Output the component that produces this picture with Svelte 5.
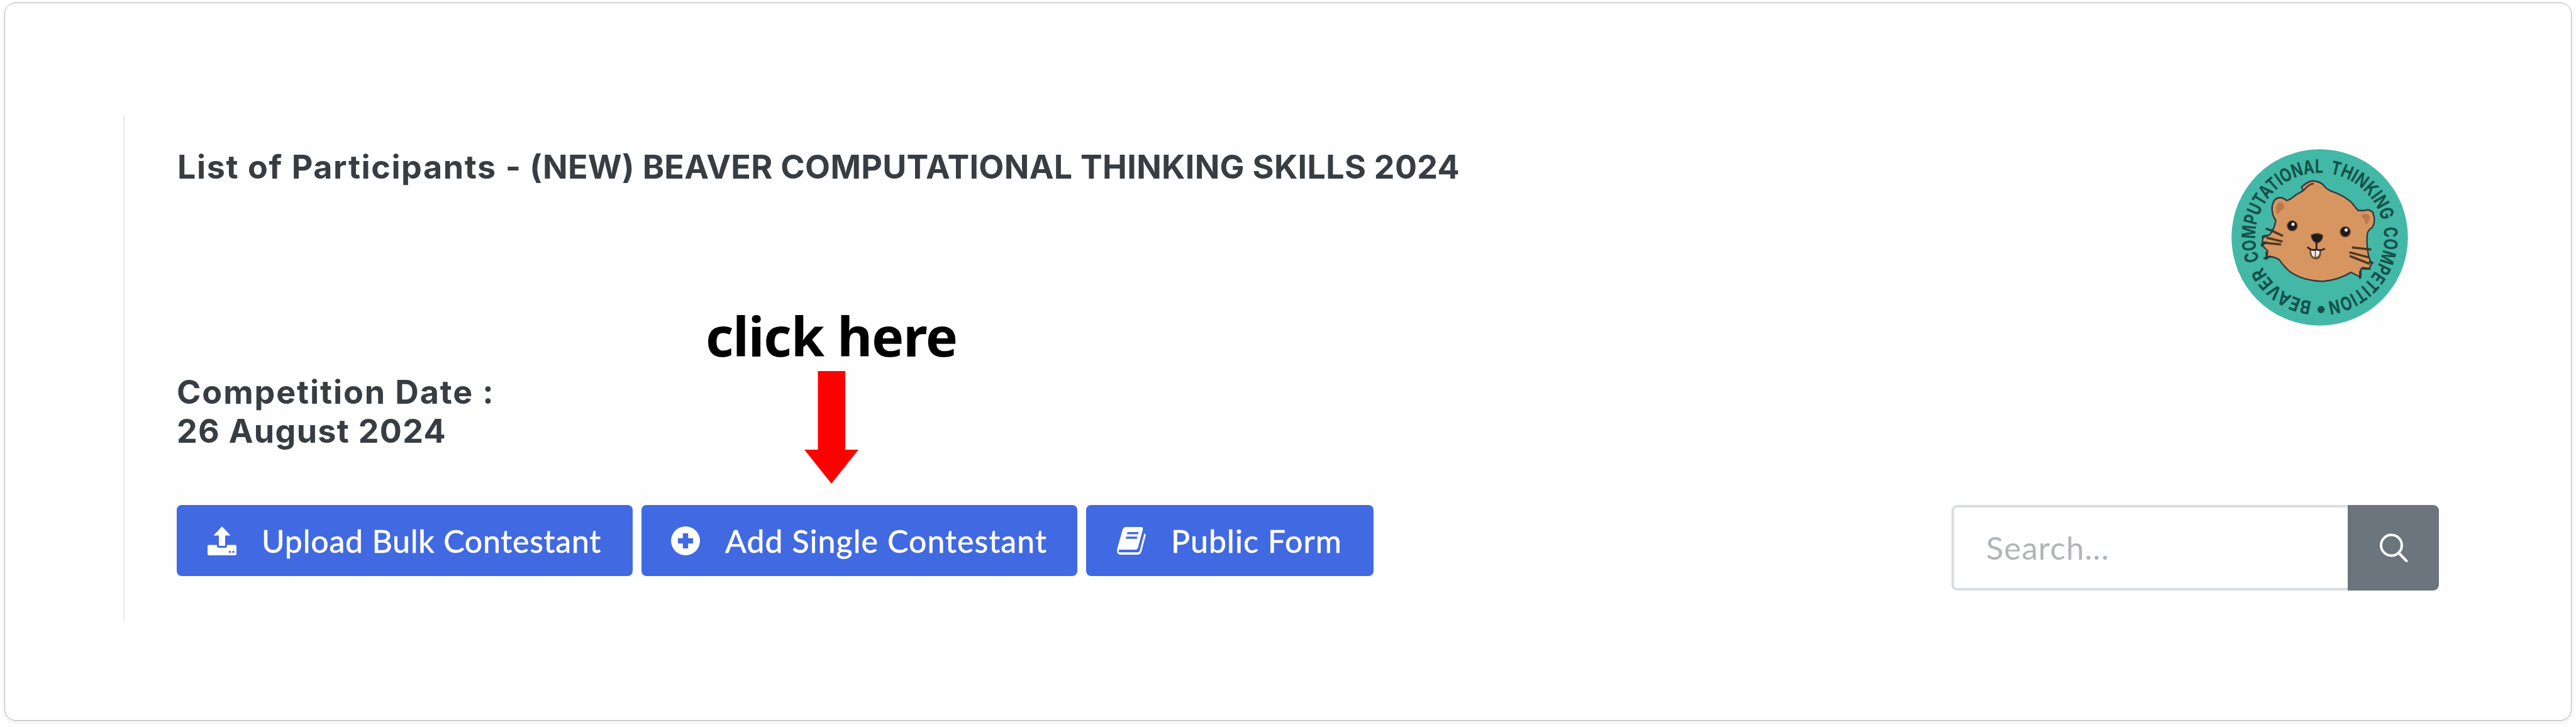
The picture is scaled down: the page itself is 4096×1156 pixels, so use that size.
<script lang="ts">
  interface ArcWord {
    text: string;
    from: number; // degrees clockwise from the top
    to: number;
  }

  const badgeWords: ArcWord[] = [
    { text: 'COMPUTATIONAL', from: 249, to: 363 },
    { text: 'THINKING', from: 9, to: 75 },
    { text: 'COMPETITION', from: 81, to: 173 },
    { text: 'BEAVER', from: 187, to: 243 }
  ];

  const badgeCenter = { x: 708, y: 700 };
  const badgeTextRadius = 434;

  let search = $state('');

  function pointAt(deg: number) {
    const rad = (deg * Math.PI) / 180;
    const x = badgeCenter.x + badgeTextRadius * Math.sin(rad);
    const y = badgeCenter.y - badgeTextRadius * Math.cos(rad);
    return `${x.toFixed(1)} ${y.toFixed(1)}`;
  }

  function arcPath(word: ArcWord) {
    // a little slack at the end so the last glyph is not dropped
    return `M${pointAt(word.from)} A${badgeTextRadius} ${badgeTextRadius} 0 0 1 ${pointAt(word.to + 4)}`;
  }

  function arcLength(word: ArcWord) {
    return ((word.to - word.from) * Math.PI * badgeTextRadius) / 180;
  }
</script>

<div class="card">
  <main class="panel">
    <header class="header">
      <h1 class="title">
        <span class="title__lead">List of Participants -</span> (NEW) BEAVER COMPUTATIONAL THINKING SKILLS 2024
      </h1>
      <svg class="badge" viewBox="113 105 1190 1190" role="img" aria-label="Beaver">
        <circle cx="708" cy="700" r="594" fill="#43b8a6" />
        {#each badgeWords as word, i}
          <path id="arc-{i}" d={arcPath(word)} fill="none" />
          <text class="badge__text">
            <textPath href="#arc-{i}" textLength={arcLength(word)} lengthAdjust="spacingAndGlyphs">{word.text}</textPath>
          </text>
        {/each}
        <circle cx="717" cy="1186" r="24" fill="#14514a" />
        <path
          d="M655 320 Q705 318 735 350 Q755 378 790 390 Q870 418 920 462 L965 518 L1003 520 Q1045 505 1066 533 Q1088 590 1062 632 Q1030 652 1028 680 Q1022 745 1036 820 L1056 880 L1040 912 L985 912 L984 968 L918 935 Q840 985 730 996 Q620 996 530 946 Q485 920 435 850 Q400 828 352 828 L358 790 L318 752 L328 690 L370 684 Q405 640 412 585 Q385 550 387 498 Q395 430 445 432 Q470 436 485 452 Q515 445 545 415 L597 385 L585 362 Q620 328 655 320 Z"
          fill="#d79660"
          stroke="#33373e"
          stroke-width="10"
          stroke-linejoin="round"
        />
        <path d="M597 385 Q640 335 668 338" fill="none" stroke="#5b4030" stroke-width="12" />
        <path d="M414 525 Q410 470 440 462 Q475 462 468 505 Q440 520 426 545 Z" fill="#b97b49" />
        <path d="M990 545 Q1035 535 1046 560 Q1045 600 1018 612 Q1010 570 990 562 Z" fill="#b97b49" />
        <g fill="#1d1c1d" stroke="#6b4a2e" stroke-width="6">
          <circle cx="523" cy="622" r="34" />
          <circle cx="880" cy="662" r="34" />
          <path d="M650 685 Q690 662 728 685 Q732 722 690 740 Q652 725 650 685 Z" />
        </g>
        <circle cx="528" cy="612" r="11" fill="#e8e8ea" />
        <circle cx="886" cy="650" r="11" fill="#e8e8ea" />
        <path d="M640 780 Q635 845 685 848 Q722 845 718 780 Z" fill="#70502f" />
        <path d="M650 785 H675 V832 Q650 830 650 785 Z M682 785 H708 Q708 830 682 832 Z" fill="#f0eef0" />
        <path d="M686 735 V785 M625 765 Q655 795 686 780 Q715 795 743 775" fill="none" stroke="#2b2421" stroke-width="12" />
        <g fill="none" stroke="#4f371f" stroke-width="15">
          <path d="M375 650 L460 690" />
          <path d="M350 702 L458 728" />
          <path d="M325 735 L448 748" />
          <path d="M925 768 L1055 782" />
          <path d="M908 800 L1040 835" />
          <path d="M910 825 L1045 878" />
        </g>
        <path d="M345 640 L395 660 M318 700 L355 690 M312 758 L350 730 M330 842 L380 828 M350 795 L350 850 M1040 860 L1068 875 M990 905 L1050 912 M980 925 V978" fill="none" stroke="#243b3c" stroke-width="14" />
      </svg>
    </header>

    <section class="date">
      <p class="date__line date__line--label">Competition Date :</p>
      <p class="date__line">26 August 2024</p>
    </section>

    <div class="toolbar">
      <div class="actions">
        <button class="btn btn--upload" type="button">
          <svg class="btn__icon" viewBox="0 0 46 46">
            <path d="M23 0 L36.500 14.500 H28 V31 H18 V14.500 H9.500 Z" />
            <path d="M2 29.500 H15 V31 Q15 34 18 34 H28 Q31 34 31 31 V29.500 H44 Q46 29.500 46 31.500 V43.500 Q46 46 43.500 46 H2.500 Q0 46 0 43.500 V31.500 Q0 29.500 2 29.500 Z M34 39 V42 H37 V39 Z M39.500 39 V42 H42.500 V39 Z" fill-rule="evenodd" />
          </svg>
          <span class="btn__label">Upload Bulk Contestant</span>
        </button>
        <button class="btn btn--add" type="button">
          <svg class="btn__icon" viewBox="0 0 46 46">
            <path d="M23 0 A23 23 0 1 0 23 46 A23 23 0 1 0 23 0 Z M18.800 11 H27.200 V18.800 H35 V27.200 H27.200 V35 H18.800 V27.200 H11 V18.800 H18.800 Z" fill-rule="evenodd" />
          </svg>
          <span class="btn__label">Add Single Contestant</span>
        </button>
        <button class="btn btn--form" type="button">
          <svg class="btn__icon" viewBox="0 0 48 46">
            <path d="M15 0 H40 Q44 0 43 4 L35 34 Q34 37.500 31 37.500 H5 Q2 37.500 3 41 Q3.500 42 5 42 H34 Q37 42 38 39 L45.500 10.500 Q48.500 12 47.500 15 L40.500 41 Q39 46 34.500 46 H5 Q-1 45 0.500 36 L9.500 4 Q11 0 15 0 Z M17.500 8.500 L16.500 12 H35 L36 8.500 Z M15.500 16 L14.500 19.500 H33 L34 16 Z" fill-rule="evenodd" />
          </svg>
          <span class="btn__label">Public Form</span>
        </button>
      </div>

      <form class="search">
        <input class="search__input" type="text" placeholder="Search..." bind:value={search} />
        <button class="search__button" type="button" aria-label="Search">
          <svg class="search__icon" viewBox="0 0 46 46">
            <circle cx="19.500" cy="19" r="16.500" />
            <path d="M31 31 L43.500 44" />
          </svg>
        </button>
      </form>
    </div>
  </main>

  <div class="hint">
    <span class="hint__text">click here</span>
    <svg class="hint__arrow" viewBox="0 0 86 179">
      <path d="M21.500 0 H65 V125 H86 L43 179 L0 125 H21.500 Z" fill="#ff0000" />
    </svg>
  </div>
</div>

<style>
  :global(body) {
    background: #ffffff;
    overflow: hidden;
  }

  .card {
    position: relative;
    box-sizing: border-box;
    width: 4082px;
    height: 1142px;
    margin: 4px 7px 10px;
    padding: 179px 210px 0 188px;
    border: 1px solid #b4b4b4;
    border-radius: 18px;
    background: #fefefe;
    box-shadow: 0 3px 8px rgba(0, 0, 0, 0.08);
    font-family: Inter, 'Liberation Sans', sans-serif;
  }

  .panel {
    box-sizing: border-box;
    height: 804px;
    padding: 50px 0 0 83px;
    border-left: 2px solid #e9ebef;
  }

  .header {
    display: flex;
    justify-content: space-between;
    height: 359px;
  }

  .title,
  .date__line {
    margin: 0;
    font-size: 52px;
    font-weight: 700;
    line-height: 62px;
    letter-spacing: 1.3px;
    color: #373d42;
    white-space: nowrap;
  }

  .title {
    padding: 1px 0 0 1px;
    letter-spacing: 0.3px;
  }

  .title__lead {
    letter-spacing: 1.6px;
  }

  .badge {
    width: 281px;
    height: 281px;
    margin: 3px 49px 0 0;
  }

  .badge__text {
    font-size: 126px;
    font-weight: 700;
    fill: #14514a;
  }

  .date {
    margin-bottom: 86px;
  }

  .date__line--label {
    letter-spacing: 1.9px;
  }

  .toolbar {
    display: flex;
    justify-content: space-between;
    align-items: flex-start;
  }

  .actions {
    display: flex;
    gap: 14px;
  }

  .btn {
    display: flex;
    align-items: center;
    box-sizing: border-box;
    height: 113px;
    padding: 0 0 0 47px;
    border: none;
    border-radius: 8px;
    background: #4169e1;
    color: #ffffff;
    font-family: Lato, 'Liberation Sans', sans-serif;
    font-size: 50px;
    letter-spacing: 1.1px;
    white-space: nowrap;
  }

  .btn--upload {
    width: 725px;
    letter-spacing: 0.8px;
  }

  .btn--add {
    width: 693px;
    padding-left: 45px;
  }

  .btn--form {
    width: 457px;
  }

  .btn__icon {
    flex: none;
    width: 46px;
    height: 46px;
    margin: 0 40px 0 2px;
    fill: #ffffff;
  }

  .btn__label {
    -webkit-text-stroke: 0.6px #ffffff;
  }

  .search {
    display: flex;
    width: 775px;
    height: 136px;
  }

  .search__input {
    box-sizing: border-box;
    width: 630px;
    padding: 0 0 2px 51px;
    border: 4px solid #dadde1;
    border-right: none;
    border-radius: 9px 0 0 9px;
    outline: none;
    background: #ffffff;
    font-family: Lato, 'Liberation Sans', sans-serif;
    font-size: 51px;
    letter-spacing: 1.1px;
  }

  .search__input::placeholder {
    color: #b0b5ba;
    opacity: 1;
  }

  .search__button {
    display: flex;
    align-items: center;
    justify-content: center;
    width: 145px;
    padding: 0;
    border: none;
    border-radius: 0 9px 9px 0;
    background: #6c757d;
  }

  .search__icon {
    width: 46px;
    height: 46px;
    fill: none;
    stroke: #ffffff;
    stroke-width: 4;
    stroke-linecap: round;
  }

  /* callout floating over the page */
  .hint {
    position: absolute;
    top: 470px;
    left: 1114px;
    display: flex;
    flex-direction: column;
    align-items: center;
    width: 400px;
  }

  .hint__text {
    height: 115px;
    font-family: 'Noto Sans', 'Open Sans', sans-serif;
    font-size: 86px;
    font-weight: 700;
    line-height: 117px;
    letter-spacing: -1.1px;
    color: #000000;
    white-space: nowrap;
  }

  .hint__arrow {
    width: 86px;
    height: 179px;
  }
</style>
